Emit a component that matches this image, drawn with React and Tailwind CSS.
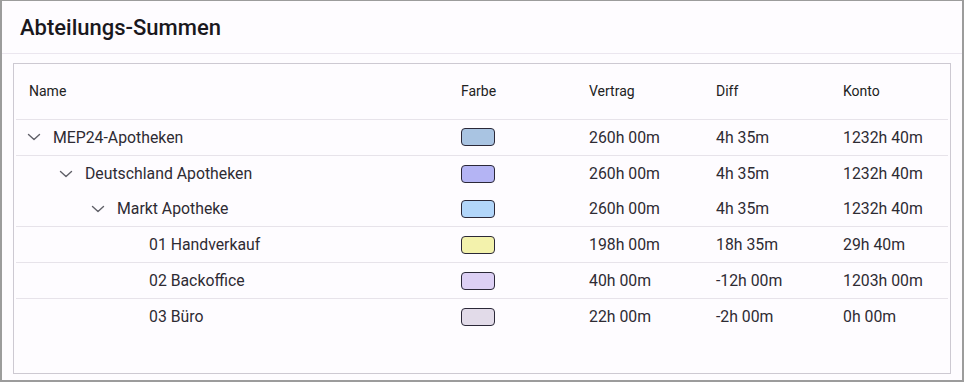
import React from "react";

const rows = [
  { name: "MEP24-Apotheken", level: 0, chevron: true, color: "#a9c4e2", v: "260h 00m", d: "4h 35m", k: "1232h 40m", line: true },
  { name: "Deutschland Apotheken", level: 1, chevron: true, color: "#b4b4f4", v: "260h 00m", d: "4h 35m", k: "1232h 40m", line: false },
  { name: "Markt Apotheke", level: 2, chevron: true, color: "#b2d6fa", v: "260h 00m", d: "4h 35m", k: "1232h 40m", line: true },
  { name: "01 Handverkauf", level: 3, chevron: false, color: "#f3f2ac", v: "198h 00m", d: "18h 35m", k: "29h 40m", line: true },
  { name: "02 Backoffice", level: 3, chevron: false, color: "#ddd0f5", v: "40h 00m", d: "-12h 00m", k: "1203h 00m", line: true },
  { name: "03 Büro", level: 3, chevron: false, color: "#e2dbe9", v: "22h 00m", d: "-2h 00m", k: "0h 00m", line: false },
];

function Chevron() {
  return (
    <svg width="16" height="16" viewBox="0 0 16 16" fill="none" stroke="#606068" strokeWidth="1.4" strokeLinecap="round" strokeLinejoin="round">
      <path d="M2.5 5.5l5.5 5 5.5-5" />
    </svg>
  );
}

const indents = ["pl-[10px]", "pl-[42px]", "pl-[74px]", "pl-[106px]"];

export default function App() {
  return (
    <div className="w-[964px] h-[382px] bg-[#fefcff] border-2 border-t border-[#9c9c9c] flex flex-col text-[#2e2b33]" style={{ fontFamily: "Roboto, 'Noto Sans', sans-serif" }}>
      <div className="h-[53px] flex items-center pl-[18px] border-b border-[#ebe6ef] shrink-0">
        <h1 className="text-[22px] font-medium text-[#1a181d]">Abteilungs-Summen</h1>
      </div>
      <div className="flex-1 px-[11px] pt-[9px] pb-[6px]">
        <div className="h-full border border-[#cdc9d2] px-[2px]">
          <div className="h-[56px] flex items-center border-b border-[#e7e3ea] text-[14px] text-[#222]">
            <div className="w-[445px] pl-[13px]">Name</div>
            <div className="w-[128px]">Farbe</div>
            <div className="w-[127px]">Vertrag</div>
            <div className="w-[127px]">Diff</div>
            <div>Konto</div>
          </div>
          {rows.map((r, i) => (
            <div key={i} className={`h-[35.8px] flex items-center text-[15.8px] ${r.line ? "border-b border-[#e7e3ea]" : ""}`}>
              <div className={`w-[445px] flex items-center ${indents[r.level]}`}>
                <span className="w-[24px] flex items-center">{r.chevron ? <Chevron /> : null}</span>
                <span className="ml-[3px]">{r.name}</span>
              </div>
              <div className="w-[128px] flex items-center">
                <span className="w-[34px] h-[18px] rounded-[4px] border border-[#2b2838]" style={{ backgroundColor: r.color }} />
              </div>
              <div className="w-[127px]">{r.v}</div>
              <div className="w-[127px]">{r.d}</div>
              <div>{r.k}</div>
            </div>
          ))}
        </div>
      </div>
    </div>
  );
}
